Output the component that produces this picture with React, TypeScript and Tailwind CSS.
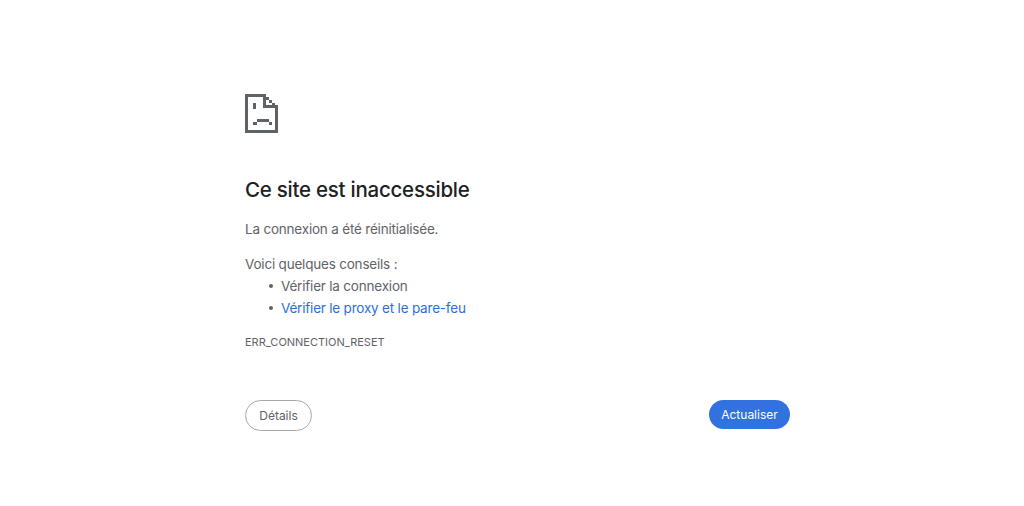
import React from 'react';

const SadPageIcon = () => (
  <svg width="33" height="40" viewBox="0 0 33 40" fill="#5f6368" shapeRendering="crispEdges">
    {/* outline */}
    <rect x="0" y="0" width="21" height="3" />
    <rect x="0" y="0" width="3" height="39" />
    <rect x="0" y="36" width="33" height="3" />
    <rect x="30" y="11" width="3" height="28" />
    {/* folded corner */}
    <rect x="21" y="3" width="3" height="3" />
    <rect x="24" y="6" width="3" height="3" />
    <rect x="27" y="9" width="3" height="3" />
    <rect x="18" y="3" width="3" height="11" />
    <rect x="18" y="11" width="15" height="3" />
    {/* eye */}
    <rect x="8" y="9" width="3" height="6" />
    {/* mouth */}
    <rect x="12" y="25" width="12" height="3" />
    <rect x="8" y="28" width="4" height="3" />
    <rect x="24" y="28" width="3" height="3" />
  </svg>
);

export default function App() {
  return (
    <div className="h-[506px] w-[1024px] bg-white font-['Inter',sans-serif] text-[#5f6368]">
      <div className="flex h-full w-[545px] flex-col ml-[245px] pt-[94px]">
        <SadPageIcon />
        <h1 className="mt-[42px] text-[20.5px] leading-[28px] font-medium text-[#202124] tracking-[-0.25px]">
          Ce site est inaccessible
        </h1>
        <p className="mt-[14px] text-[13.5px] leading-[22px] tracking-[-0.2px]">La connexion a été réinitialisée.</p>
        <p className="mt-[13px] text-[13.5px] leading-[22px] tracking-[-0.2px]">Voici quelques conseils :</p>
        <ul className="pl-[24px] text-[13.5px] leading-[22px] tracking-[-0.2px]">
          <li className="flex items-center gap-[8px]">
            <span className="h-[4px] w-[4px] rounded-full bg-[#5f6368]" />
            Vérifier la connexion
          </li>
          <li className="flex items-center gap-[8px] text-[#2a6fe0]">
            <span className="h-[4px] w-[4px] rounded-full bg-[#5f6368]" />
            Vérifier le proxy et le pare-feu
          </li>
        </ul>
        <p className="mt-[12px] text-[11px] leading-[22px] uppercase">ERR_CONNECTION_RESET</p>
        <div className="mt-[47px] flex items-start justify-between">
          <button className="h-[31px] w-[67px] rounded-full border border-[#a8a8a8] bg-white text-[12px] font-normal text-[#5f6368]">
            Détails
          </button>
          <button className="h-[29px] w-[81px] rounded-full bg-[#3272e0] text-[12px] font-normal text-white">
            Actualiser
          </button>
        </div>
      </div>
    </div>
  );
}
